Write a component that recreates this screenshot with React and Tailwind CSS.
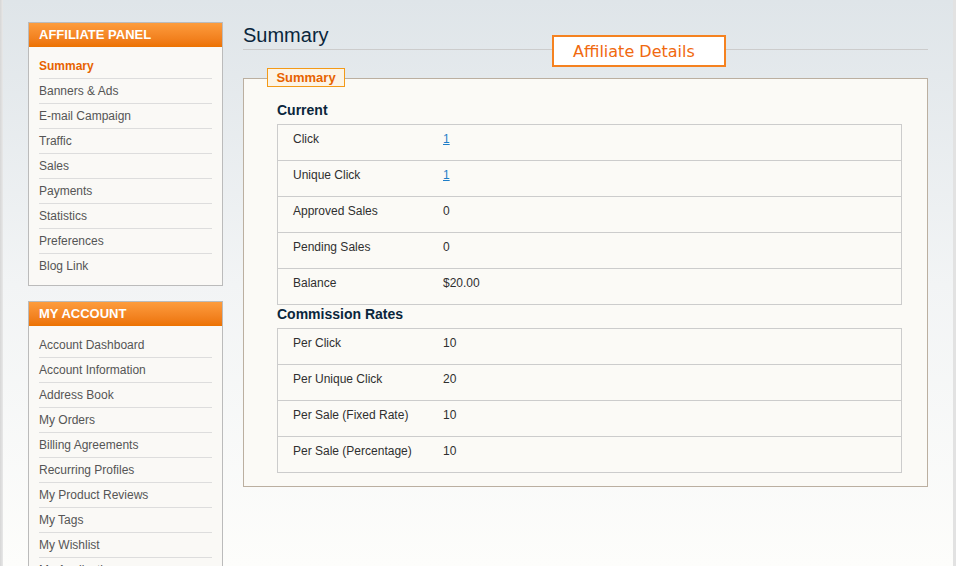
import React from "react";

const affiliateLinks = [
  "Summary",
  "Banners & Ads",
  "E-mail Campaign",
  "Traffic",
  "Sales",
  "Payments",
  "Statistics",
  "Preferences",
  "Blog Link",
];

const accountLinks = [
  "Account Dashboard",
  "Account Information",
  "Address Book",
  "My Orders",
  "Billing Agreements",
  "Recurring Profiles",
  "My Product Reviews",
  "My Tags",
  "My Wishlist",
  "My Applications",
  "Newsletter Subscriptions",
];

const current = [
  { label: "Click", value: "1", link: true },
  { label: "Unique Click", value: "1", link: true },
  { label: "Approved Sales", value: "0" },
  { label: "Pending Sales", value: "0" },
  { label: "Balance", value: "$20.00" },
];

const rates = [
  { label: "Per Click", value: "10" },
  { label: "Per Unique Click", value: "20" },
  { label: "Per Sale (Fixed Rate)", value: "10" },
  { label: "Per Sale (Percentage)", value: "10" },
];

function SideBlock({ title, links, active }) {
  return (
    <div className="border border-[#bbbbbb] bg-[#faf9f6]">
      <div className="h-[24px] pl-[10px] bg-gradient-to-b from-[#fd9c3c] to-[#ec7200] text-white text-[13px] font-bold uppercase leading-[24px]">
        {title}
      </div>
      <ul className="px-[10px] pt-[7px] pb-[6px]">
        {links.map((l, i) => (
          <li
            key={l}
            className={`h-[25px] leading-[24px] text-[12px] ${i < links.length - 1 ? "border-b border-[#dddddd]" : ""} ${l === active ? "text-[#e76200] font-bold" : "text-[#555555]"}`}
          >
            {l}
          </li>
        ))}
      </ul>
    </div>
  );
}

function DataTable({ rows }) {
  return (
    <div className="border border-[#cccccc] border-b-0">
      {rows.map((r) => (
        <div key={r.label} className="grid grid-cols-[150px_1fr] h-[36px] border-b border-[#cccccc] text-[12px] leading-[16px] text-[#2f2f2f]">
          <div className="pl-[15px] pt-[6px]">{r.label}</div>
          <div className="pl-[15px] pt-[6px]">
            {r.link ? <a className="text-[#1e7ec8] underline" href="#">{r.value}</a> : r.value}
          </div>
        </div>
      ))}
    </div>
  );
}

export default function App() {
  return (
    <div
      className="relative h-[566px] w-full overflow-hidden flex bg-gradient-to-b from-[#dfe5e9] via-[#f2f4f5] to-[#fdfdfb]"
      style={{ fontFamily: '"Liberation Sans", Arial, sans-serif' }}
    >
      <div className="w-[3px] shrink-0 bg-gradient-to-r from-[#d6d6d6] to-[#e8e8e8]" />
      <div className="flex flex-1 pl-[25px] pt-[22px]">
        <aside className="w-[195px] shrink-0 flex flex-col gap-[15px]">
          <SideBlock title="Affiliate Panel" links={affiliateLinks} active="Summary" />
          <SideBlock title="My Account" links={accountLinks} />
        </aside>

        <main className="relative ml-[20px] w-[685px]">
          <h1 className="text-[20px] leading-[26px] pb-[1px] text-[#0a263c] border-b border-[#cccccc]">
            Summary
          </h1>

          <div className="absolute left-[309px] top-[13px] w-[174px] h-[32px] border-2 border-[#f58220] bg-white pl-[19px] text-[16px] leading-[29px] text-[#f0690f]" style={{ fontFamily: '"DejaVu Sans", sans-serif' }}>
            Affiliate Details
          </div>

          <div className="relative mt-[28px] border border-[#bbafa0] bg-[#fbfaf6] pl-[33px] pr-[25px] pt-[22px] pb-[13px]">
            <div className="absolute left-[23px] top-[-11px] w-[78px] h-[19px] border border-[#f39a18] bg-[#fcf4e6] text-center text-[13px] font-bold leading-[17px] text-[#e76200]">
              Summary
            </div>
            <h3 className="text-[14px] font-bold leading-[18px] text-[#0a263c] mb-[5px]">Current</h3>
            <DataTable rows={current} />
            <h3 className="text-[14px] font-bold leading-[18px] text-[#0a263c] mb-[5px]">Commission Rates</h3>
            <DataTable rows={rates} />
          </div>
        </main>
      </div>
      <div className="absolute right-0 top-0 h-full w-[3px] bg-[#e2e2e2]" />
    </div>
  );
}
